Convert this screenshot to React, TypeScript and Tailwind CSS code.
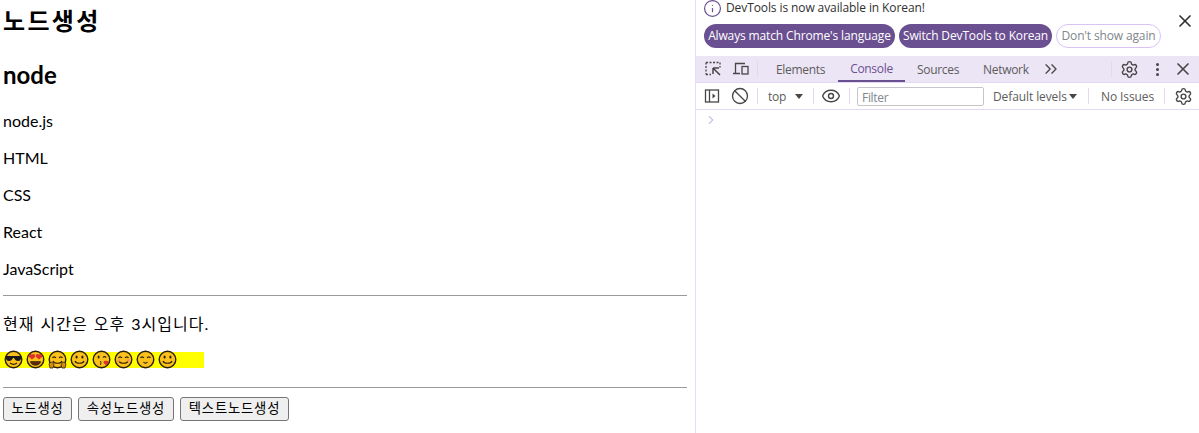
import React from "react";
import { Settings, X, ChevronsRight, Ban, Eye, Info, ChevronRight } from "lucide-react";

const kr = "font-['Lato','Noto_Sans_CJK_KR',sans-serif]";

function Face({ children, fill = "#fcc21b" }: { children?: React.ReactNode; fill?: string }) {
  return (
    <svg width="19" height="19" viewBox="0 0 19 19" className="shrink-0 -mt-px">
      <circle cx="9.5" cy="9.5" r="8.3" fill={fill} stroke="#2b2006" strokeWidth="1.4" />
      {children}
    </svg>
  );
}
const Smile = () => <path d="M5 11c1 3 8 3 9 0" fill="none" stroke="#2b2006" strokeWidth="1.2" />;
const Eyes = () => (
  <>
    <ellipse cx="6.6" cy="7" rx="1.1" ry="1.6" fill="#2b2006" />
    <ellipse cx="12.4" cy="7" rx="1.1" ry="1.6" fill="#2b2006" />
  </>
);
const Arcs = () => (
  <path d="M4.5 8c.8-1.6 2.6-1.6 3.4 0M11.1 8c.8-1.6 2.6-1.6 3.4 0" fill="none" stroke="#2b2006" strokeWidth="1.2" />
);

function Emojis() {
  return (
    <span className="inline-flex items-center gap-[3px] bg-[#ffff00] w-[204px] h-[16px] pl-[4px]">
      <Face>
        <path d="M2 6h15v2c0 2-1 3-3 3s-3-1-4-3h-1c-1 2-2 3-4 3S2 10 2 8z" fill="#1a1a1a" />
        <path d="M6 13c2 1.5 5 1.5 7 0" fill="none" stroke="#2b2006" strokeWidth="1.2" />
      </Face>
      <Face>
        <path d="M6 4.5c-2-1.5-4 .5-3 2.500l3 2.500 3-2.500c1-2-1-4-3-2.500zM13 4.500c-2-1.500-4 .5-3 2.500l3 2.500 3-2.500c1-2-1-4-3-2.500z" fill="#e0322c" />
        <path d="M4.500 11.500h10c0 5-10 5-10 0z" fill="#5a2a10" stroke="#2b2006" strokeWidth=".6" />
      </Face>
      <Face>
        <Arcs />
        <Smile />
        <path d="M1 14c2-3 4-2 5 1l-1 3H2zM18 14c-2-3-4-2-5 1l1 3h3z" fill="#d98b12" stroke="#2b2006" strokeWidth=".8" />
      </Face>
      <Face>
        <Eyes />
        <Smile />
      </Face>
      <Face>
        <ellipse cx="6.600" cy="7" rx="1" ry="1.500" fill="#2b2006" />
        <path d="M11 7.500c.8-1.200 2.400-1.200 3.200 0" fill="none" stroke="#2b2006" strokeWidth="1.100" />
        <path d="M8 11.500c1.500 0 1.500 1 .5 1.500 1 .5 1 1.500-.5 1.500" fill="none" stroke="#2b2006" strokeWidth="1" />
        <path d="M14 11c-1.300-1-3 .3-2.500 1.800l2.500 2.500 2.500-2.500c.5-1.500-1.200-2.800-2.500-1.800z" fill="#e0322c" />
      </Face>
      <Face>
        <Arcs />
        <Smile />
        <circle cx="4.500" cy="10.500" r="1.500" fill="#f6955f" />
        <circle cx="14.500" cy="10.500" r="1.500" fill="#f6955f" />
      </Face>
      <Face>
        <Arcs />
        <path d="M7.500 12c1 1.500 3 1.500 4 0" fill="none" stroke="#2b2006" strokeWidth="1.200" />
      </Face>
      <Face>
        <Eyes />
        <Smile />
      </Face>
    </span>
  );
}

function Pill({ children, className }: { children: React.ReactNode; className?: string }) {
  return (
    <span className={"h-[24px] rounded-full flex items-center justify-center text-[12px] tracking-[-0.14px] whitespace-nowrap " + (className ?? "")}>
      {children}
    </span>
  );
}

const Sep = ({ className }: { className?: string }) => (
  <span className={"w-px h-[16px] bg-[#e3d8f0] shrink-0 " + (className ?? "")} />
);

export default function App() {
  return (
    <div className="flex w-[1199px] h-[433px] overflow-hidden bg-white text-black">
      <div className={"w-[695px] shrink-0 pl-[3px] pr-[8px] " + kr}>
        <h1 className="text-[24px] font-bold leading-[32px] pt-[5px] tracking-[2.3px]">노드생성</h1>
        <h2 className="text-[24px] font-bold leading-[32px] mt-[22px]">node</h2>
        <p className="text-[16px] leading-[21px] mt-[19px]">node.js</p>
        <p className="text-[16px] leading-[21px] mt-[16px]">HTML</p>
        <p className="text-[16px] leading-[21px] mt-[16px]">CSS</p>
        <p className="text-[16px] leading-[21px] mt-[16px]">React</p>
        <p className="text-[16px] leading-[21px] mt-[16px]">JavaScript</p>
        <hr className="border-0 h-px bg-[#9a9a9a] mt-[16px]" />
        <p className="text-[16px] leading-[21px] mt-[17px] tracking-[1px] [word-spacing:1px]">현재 시간은 오후 3시입니다.</p>
        <div className="mt-[17px] h-[16px] flex">
          <div className="-ml-[3px]"><Emojis /></div>
        </div>
        <hr className="border-0 h-px bg-[#9a9a9a] mt-[20px]" />
        <div className="flex gap-[6px] mt-[9px]">
          {["노드생성", "속성노드생성", "텍스트노드생성"].map((t, i) => (
            <button
              key={t}
              className={
                "h-[24px] border border-[#767676] rounded-[3px] bg-[#efefef] text-[13.33px] tracking-[0.8px] flex items-center justify-center " +
                ["w-[69px]", "w-[96px]", "w-[109px]"][i]
              }
            >
              {t}
            </button>
          ))}
        </div>
      </div>

      <div className="flex-1 border-l border-[#e6dff0] font-['Open_Sans','Noto_Sans',sans-serif] text-[#474747] tracking-[-0.3px]">
        <div className="h-[56px] relative pl-[8px]">
          <div className="flex items-center h-[15px] gap-[3px] text-[12px] text-[#303030] pt-[1px]">
            <Info size={19} strokeWidth={1.5} className="text-[#6b4f8f] -ml-[1px]" />
            <span className="ml-[1px] tracking-[-0.1px]">DevTools is now available in Korean!</span>
          </div>
          <div className="flex gap-[4px] mt-[9px]">
            <Pill className="w-[191px] bg-[#6b5091] text-white">Always match Chrome's language</Pill>
            <Pill className="w-[153px] bg-[#6b5091] text-white">Switch DevTools to Korean</Pill>
            <Pill className="w-[105px] border border-[#d9c3f5] text-[#80868b]">Don't show again</Pill>
          </div>
          <X size={20} strokeWidth={2} className="absolute right-[4px] top-[11px] text-[#303030]" />
        </div>

        <div className="h-[27px] bg-[#ece5f5] border-b border-[#e3d8f5] flex items-center text-[12px] text-[#5c5c5c]">
          <svg width="16" height="16" viewBox="0 0 16 16" className="ml-[9px] shrink-0" fill="none" stroke="#474747">
            <path d="M1 1.500h14M1 1.500v12M15 1.500v5M1 13.500h5" strokeWidth="1.300" strokeDasharray="2 1.500" />
            <path d="M8 7h6M8 7v6M8 7l7 7" strokeWidth="1.500" />
          </svg>
          <svg width="17" height="16" viewBox="0 0 17 16" className="ml-[11px] shrink-0" fill="none" stroke="#474747" strokeWidth="1.300">
            <path d="M3.500 12V2.500H13M1 12.500h7" />
            <rect x="10" y="5.500" width="6" height="7.500" />
          </svg>
          <Sep className="ml-[8px]" />
          <span className="ml-[18px] pt-[2px] w-[50px] shrink-0">Elements</span>
          <div className="ml-[12px] w-[67px] h-[26px] border-b-2 border-[#6b5091] text-[#6b5091] flex items-center justify-center pt-[2px]">Console</div>
          <span className="ml-[12px] pt-[2px] w-[41px] shrink-0">Sources</span>
          <span className="ml-[25px] pt-[2px] w-[45px] shrink-0">Network</span>
          <ChevronsRight size={20} strokeWidth={1.600} className="ml-[13px] text-[#474747]" />
          <Sep className="ml-[50px]" />
          <Settings size={19} strokeWidth={1.800} className="ml-[8px] text-[#474747]" />
          <span className="ml-[17px] flex flex-col gap-[2px] w-[3px] shrink-0">
            <span className="w-[3px] h-[3px] rounded-full bg-[#474747]" />
            <span className="w-[3px] h-[3px] rounded-full bg-[#474747]" />
            <span className="w-[3px] h-[3px] rounded-full bg-[#474747]" />
          </span>
          <X size={20} strokeWidth={2} className="ml-[14px] text-[#474747]" />
        </div>

        <div className="h-[27px] border-b border-[#e3d8f5] flex items-center text-[12px] text-[#5c5c5c]">
          <svg width="16" height="16" viewBox="0 0 16 16" className="ml-[8px] shrink-0" fill="none" stroke="#474747" strokeWidth="1.300">
            <rect x="1.500" y="2" width="13" height="12" />
            <path d="M5.500 2v12" />
            <path d="M8.500 5.500v5l3-2.500z" fill="#474747" stroke="none" />
          </svg>
          <Ban size={18} strokeWidth={1.800} className="ml-[11px] text-[#474747]" />
          <Sep className="ml-[8px]" />
          <span className="ml-[10px] pt-[2px] tracking-[-0.2px] w-[19px] shrink-0">top</span>
          <svg width="8" height="5" viewBox="0 0 8 5" className="ml-[8px]"><path d="M0 0h8L4 5z" fill="#474747" /></svg>
          <Sep className="ml-[10px]" />
          <Eye size={20} strokeWidth={1.700} className="ml-[7px] text-[#474747]" />
          <Sep className="ml-[8px]" />
          <div className="ml-[7px] w-[127px] h-[19px] border border-[#c8c4cc] rounded-[2px] flex items-center pl-[4px] pt-[3px] text-[#80868b]">Filter</div>
          <span className="ml-[9px] pt-[2px] w-[73px] shrink-0 whitespace-nowrap tracking-[-0.1px]">Default levels</span>
          <svg width="8" height="5" viewBox="0 0 8 5" className="ml-[3px]"><path d="M0 0h8L4 5z" fill="#474747" /></svg>
          <Sep className="ml-[11px]" />
          <span className="ml-[12px] pt-[2px] w-[53px] shrink-0 whitespace-nowrap tracking-[-0.1px]">No Issues</span>
          <Sep className="ml-[10px]" />
          <Settings size={19} strokeWidth={1.800} className="ml-[9px] text-[#474747]" />
        </div>

        <div className="h-[20px] flex items-center pl-[8px]">
          <ChevronRight size={14} strokeWidth={1.800} className="text-[#b9a8d6]" />
        </div>
      </div>
    </div>
  );
}
